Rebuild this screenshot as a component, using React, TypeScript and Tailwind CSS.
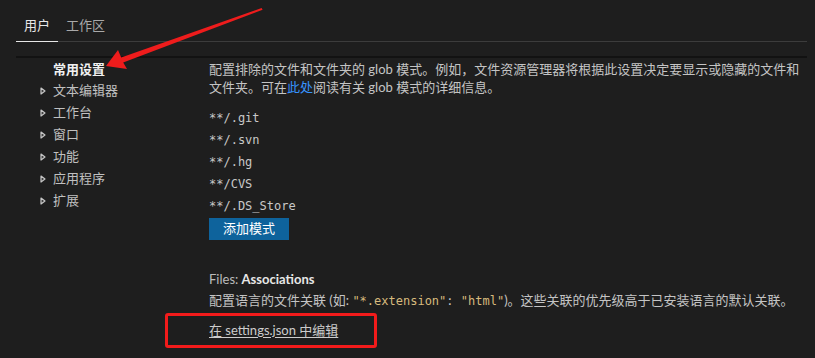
import React from "react";

const cjk = 'Lato, "Noto Sans CJK SC", sans-serif';
const mono = '"DejaVu Sans Mono", "Liberation Mono", monospace';

function Twistie() {
  return (
    <svg width="6" height="8" viewBox="0 0 6 8" className="shrink-0">
      <path d="M1 1 L5 4 L1 7 Z" fill="#3a3a3a" stroke="#c5c5c5" strokeWidth="1.2" strokeLinejoin="round" />
    </svg>
  );
}

export default function App() {
  const tree = ["文本编辑器", "工作台", "窗口", "功能", "应用程序", "扩展"];
  const patterns = ["**/.git", "**/.svn", "**/.hg", "**/CVS", "**/.DS_Store"];
  return (
    <div
      className="relative w-[815px] h-[358px] overflow-hidden bg-[#1e1e1e] text-[13px] text-[#cccccc]"
      style={{ fontFamily: cjk }}
    >
      {/* tabs */}
      <div className="ml-[16px] mr-[8px] pt-[15px] flex">
        <div className="px-2 h-[27px] leading-[20px] border-b border-[#e7e7e7] text-[#e7e7e7]">用户</div>
        <div className="px-2 h-[27px] leading-[20px] border-b border-[#3c3c3c] text-[#a9a9a9]">工作区</div>
        <div className="flex-1 h-[27px] border-b border-[#3c3c3c]" />
      </div>
      <div className="ml-[16px] mr-[8px] h-[14px]" />
      <div className="ml-[16px] mr-[8px] h-[2px] bg-[#121212]" />

      {/* content */}
      <div className="flex">
        <div className="w-[209px] shrink-0 pt-[1px]">
          <div className="h-[21px] flex items-center pl-[53px] font-bold text-[#f0f0f0]">常用设置</div>
          {tree.map((t) => (
            <div key={t} className="h-[22px] flex items-center pl-[40px] gap-[7px] text-[#c0c0c0]">
              <Twistie />
              <span>{t}</span>
            </div>
          ))}
        </div>

        <div className="flex-1 pt-[2px]">
          <div className="leading-[18px] whitespace-nowrap text-[#c4c4c4]">
            配置排除的文件和文件夹的 glob 模式。例如，文件资源管理器将根据此设置决定要显示或隐藏的文件和
            <br />
            文件夹。可在<span className="text-[#3794ff]">此处</span>阅读有关 glob 模式的详细信息。
          </div>
          <div className="mt-[11px] text-[12px] text-[#c8c8c8]" style={{ fontFamily: mono }}>
            {patterns.map((p) => (
              <div key={p} className="h-[22px] flex items-center">{p}</div>
            ))}
          </div>
          <div className="mt-[1px] w-[80px] h-[22px] flex items-center justify-center bg-[#0e639c] text-white">
            添加模式
          </div>

          <div className="mt-[30px] leading-[18px]">
            <span className="text-[#bbbbbb]">Files: </span>
            <span className="font-bold text-[#e7e7e7]">Associations</span>
          </div>
          <div className="mt-[3px] leading-[18px] whitespace-nowrap text-[#c4c4c4]">
            配置语言的文件关联 (如:{" "}
            <span className="text-[12px] text-[#d7ba7d]" style={{ fontFamily: mono }}>"*.extension"</span>
            <span className="text-[12px]" style={{ fontFamily: mono }}>: </span>
            <span className="text-[12px] text-[#d7ba7d]" style={{ fontFamily: mono }}>"html"</span>
            )。这些关联的优先级高于已安装语言的默认关联。
          </div>

          <div className="mt-[3px] -ml-[44px] w-[212px] h-[35px] border-[3px] border-[#f21b1b] rounded-[3px] flex items-center pl-[41px]">
            <span className="underline underline-offset-2 text-[#cccccc]">在 settings.json 中编辑</span>
          </div>
        </div>
      </div>

      {/* red arrow annotation */}
      <svg className="absolute left-0 top-0 pointer-events-none" width="815" height="358">
        <polygon
          points="106,66 118,50 121.2,57.4 261.6,8 262.6,9.8 123.2,62.6 127,69"
          fill="#ee1c1c"
        />
      </svg>
    </div>
  );
}
